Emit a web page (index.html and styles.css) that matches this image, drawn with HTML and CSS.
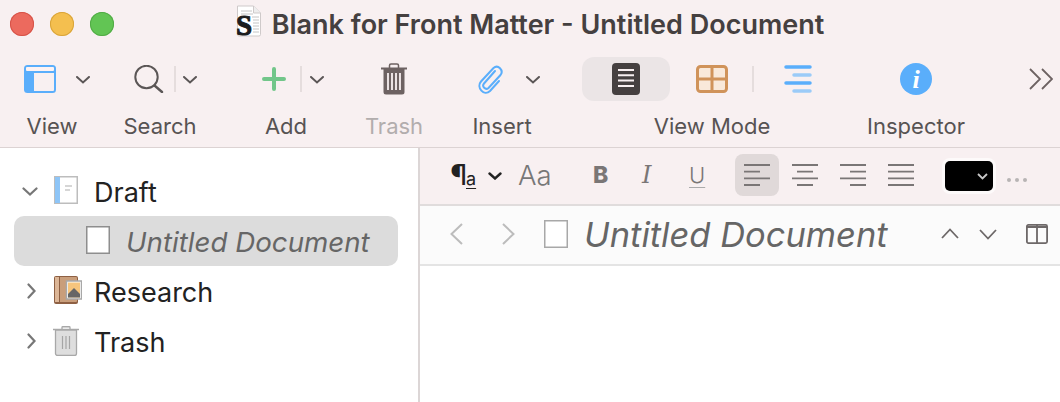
FILE: index.html
```html
<!DOCTYPE html>
<html lang="en">
<head>
<meta charset="utf-8">
<title>Blank for Front Matter - Untitled Document</title>
<link rel="stylesheet" href="styles.css">
</head>
<body>
<div class="window">
  <header class="chrome">
    <div class="titlebar">
      <div class="lights">
        <span class="light red"></span><span class="light yellow"></span><span class="light green"></span>
      </div>
      <div class="title">
        <svg class="doc-icon" width="26" height="38" viewBox="0 0 26 38">
          <path d="M1.500 1h16l7 7v21.500a1.500 1.500 0 0 1-1.500 1.500h-20a1.500 1.500 0 0 1-1.500-1.500z" fill="#fff" stroke="#cfcaca"/>
          <path d="M17.500 1v7h7" fill="#eee" stroke="#cfcaca"/>
          <path d="M5 6h11M5 9h12M16 12h7M17 15h6M17 18h6M17 21h6M17 24h6M17 27h6" stroke="#c4c4c4"/>
          <text x="0" y="29.500" class="doc-s">S</text>
        </svg>
        <span>Blank for Front Matter - Untitled Document</span>
      </div>
      <div></div>
    </div>
    <div class="toolbar">
      <div class="tool t-view">
        <div class="tool-icons">
          <svg class="i-view" width="32" height="28" viewBox="0 0 32 28"><rect x="0" y="0" width="32" height="28" rx="3.500" fill="#5aaefb"/><rect x="2" y="2" width="28" height="4" rx="1" fill="#fdf3f3"/><path d="M10 8h20v17a1 1 0 0 1-1 1h-19z" fill="#f8f0f1"/></svg>
          <svg class="chev" width="14" height="8" viewBox="0 0 14 8"><path d="M1 1l6 5.500 6-5.500" fill="none" stroke="#5b5656" stroke-width="2" stroke-linecap="round"/></svg>
        </div>
        <div class="label">View</div>
      </div>
      <div class="tool t-search">
        <div class="tool-icons">
          <svg class="i-search" width="30" height="28" viewBox="0 0 30 28"><circle cx="12.500" cy="12" r="11.200" fill="none" stroke="#5b5656" stroke-width="2"/><path d="M20.500 20.500l7.500 6.500" stroke="#5b5656" stroke-width="2.400" stroke-linecap="round"/></svg>
          <span class="sep"></span>
          <svg class="chev" width="14" height="8" viewBox="0 0 14 8"><path d="M1 1l6 5.500 6-5.500" fill="none" stroke="#5b5656" stroke-width="2" stroke-linecap="round"/></svg>
        </div>
        <div class="label">Search</div>
      </div>
      <div class="tool t-add">
        <div class="tool-icons">
          <svg class="i-plus" width="24" height="24" viewBox="0 0 24 24"><path d="M12 2v20M2 12h20" stroke="#72c68a" stroke-width="4" stroke-linecap="round"/></svg>
          <span class="sep"></span>
          <svg class="chev" width="14" height="8" viewBox="0 0 14 8"><path d="M1 1l6 5.500 6-5.500" fill="none" stroke="#5b5656" stroke-width="2" stroke-linecap="round"/></svg>
        </div>
        <div class="label">Add</div>
      </div>
      <div class="tool t-trash">
        <div class="tool-icons">
          <svg width="28" height="32" viewBox="0 0 28 32"><path d="M1 5.500h26" stroke="#6d6262" stroke-width="2"/><path d="M9.500 5V2.500q0-1.500 1.500-1.500h6q1.500 0 1.500 1.500V5" fill="none" stroke="#6d6262" stroke-width="1.500"/><path d="M3.500 6h21v23a2.500 2.500 0 0 1-2.500 2.500H6A2.500 2.500 0 0 1 3.500 29z" fill="#6d6262"/><path d="M8 10v17M12 10v17M16 10v17M20 10v17" stroke="#f8f0f1" stroke-width="1.800"/></svg>
        </div>
        <div class="label dim">Trash</div>
      </div>
      <div class="tool t-insert">
        <div class="tool-icons">
          <svg class="i-clip" width="26" height="30" viewBox="0 0 26 30"><path d="M17 7L6 19.500c-2.500 3 1.500 7 4.500 4.500L22.500 11c3.500-4.500-2.500-11-7-7L3 17.500c-5 6 3 15 9 9.500L21 17" fill="none" stroke="#5aaefb" stroke-width="2" stroke-linecap="round"/></svg>
          <svg class="chev" width="14" height="8" viewBox="0 0 14 8"><path d="M1 1l6 5.500 6-5.500" fill="none" stroke="#5b5656" stroke-width="2" stroke-linecap="round"/></svg>
        </div>
        <div class="label">Insert</div>
      </div>
      <div class="tool t-mode">
        <div class="tool-icons">
          <div class="mode-pill">
            <svg width="28" height="32" viewBox="0 0 28 32"><rect width="28" height="32" rx="4" fill="#454040"/><path d="M6 7h16M6 12.300h16M6 17.600h16M6 23h16" stroke="#f8f0f1" stroke-width="2"/></svg>
          </div>
          <svg class="i-grid" width="32" height="28" viewBox="0 0 32 28"><rect x="1.500" y="1.500" width="29" height="25" rx="3" fill="#f9e9da" stroke="#d0935a" stroke-width="3"/><path d="M16 1v26M1 14h30" stroke="#d0935a" stroke-width="3"/></svg>
          <span class="sep"></span>
          <svg class="i-outline" width="28" height="28" viewBox="0 0 28 28"><path d="M2 2h24M2 18h24" stroke="#5aaefb" stroke-width="3.500" stroke-linecap="round"/><path d="M10 10h16M10 26h16" stroke="#9bcbf8" stroke-width="3.500" stroke-linecap="round"/></svg>
        </div>
        <div class="label">View Mode</div>
      </div>
      <div class="tool t-inspector">
        <div class="tool-icons">
          <svg width="32" height="32" viewBox="0 0 32 32"><circle cx="16" cy="16" r="16" fill="#5aaefb"/><text x="16" y="25" class="info">i</text></svg>
        </div>
        <div class="label">Inspector</div>
      </div>
      <div class="tool t-more">
        <div class="tool-icons">
          <svg width="24" height="22" viewBox="0 0 24 22"><path d="M1 1l10 10L1 21M13 1l10 10-10 10" fill="none" stroke="#6d6262" stroke-width="1.800"/></svg>
        </div>
      </div>
    </div>
  </header>
  <main class="body">
    <aside class="sidebar">
      <div class="row">
        <svg class="disc" width="16" height="9" viewBox="0 0 16 9"><path d="M1.500 1.500L8 7.500l6.500-6" fill="none" stroke="#777" stroke-width="2.200" stroke-linecap="round"/></svg>
        <svg class="ri" width="24" height="28" viewBox="0 0 24 28"><rect x=".75" y=".75" width="22.500" height="26.500" fill="#fff" stroke="#bdbdbd" stroke-width="1.500"/><rect x="1" y="1" width="5" height="26" fill="#8ec5f7"/><path d="M11 10h7M11 14h5" stroke="#c9c9c9" stroke-width="1.500"/></svg>
        <span>Draft</span>
      </div>
      <div class="row child selected">
        <svg class="ri" width="24" height="28" viewBox="0 0 24 28"><rect x=".75" y=".75" width="22.500" height="26.500" fill="#fff" stroke="#8e8e8e" stroke-width="1.500"/></svg>
        <span class="italic">Untitled Document</span>
      </div>
      <div class="row">
        <svg class="disc closed" width="9" height="16" viewBox="0 0 9 16"><path d="M1.500 1.500L7.500 8l-6 6.500" fill="none" stroke="#777" stroke-width="2.200" stroke-linecap="round"/></svg>
        <svg class="ri book" width="28" height="28" viewBox="0 0 28 28"><rect x="0" y="0" width="24" height="28" rx="2" fill="#8e6043"/><rect x="1" y="1" width="22" height="25" rx="1" fill="#c99e7b"/><rect x="1" y="1" width="4" height="25" fill="#dcb697"/><rect x="5" y="0" width="1" height="28" fill="#8e6043"/><rect x="12.500" y="5" width="15" height="18" fill="#fff" stroke="#a8a8a8" stroke-width="1.500"/><rect x="14" y="6.500" width="12" height="15" fill="#f6c57d"/><path d="M14 18l6-6 6 6v3.500H14z" fill="#666"/></svg>
        <span>Research</span>
      </div>
      <div class="row">
        <svg class="disc closed" width="9" height="16" viewBox="0 0 9 16"><path d="M1.500 1.500L7.500 8l-6 6.500" fill="none" stroke="#777" stroke-width="2.200" stroke-linecap="round"/></svg>
        <svg class="ri bin" width="26" height="30" viewBox="0 0 26 30"><path d="M0 3.500h26" stroke="#a8a8a8" stroke-width="1.500"/><path d="M9 3V1.500q0-.75.75-.75h6.500q.75 0 .75.75V3" fill="none" stroke="#a8a8a8" stroke-width="1.300"/><path d="M2.500 4h21v23.500a2 2 0 0 1-2 2h-17a2 2 0 0 1-2-2z" fill="#dedede" stroke="#a8a8a8" stroke-width="1.300"/><path d="M9.500 10v13M13 10v13M16.500 10v13" stroke="#a5a5a5" stroke-width="1.200"/></svg>
        <span>Trash</span>
      </div>
    </aside>
    <section class="editor">
      <div class="format">
        <div class="f-style"><span class="pil">¶</span><span class="pil-a">a</span></div>
        <svg class="f-chev" width="14" height="8" viewBox="0 0 14 8"><path d="M1.500 1.500L7 6.500l5.500-5" fill="none" stroke="#222" stroke-width="2.400" stroke-linecap="round"/></svg>
        <span class="f-aa">Aa</span>
        <span class="f-b">B</span>
        <span class="f-i">I</span>
        <span class="f-u">U</span>
        <div class="align-on">
          <svg width="26" height="22" viewBox="0 0 26 22"><path d="M0 1h26M0 7.700h16M0 14.300h26M0 21h16" stroke="#7a7676" stroke-width="1.800"/></svg>
        </div>
        <svg class="al" width="26" height="22" viewBox="0 0 26 22"><path d="M0 1h26M5 7.700h16M0 14.300h26M5 21h16" stroke="#7a7676" stroke-width="1.800"/></svg>
        <svg class="al" width="26" height="22" viewBox="0 0 26 22"><path d="M0 1h26M10 7.700h16M0 14.300h26M10 21h16" stroke="#7a7676" stroke-width="1.800"/></svg>
        <svg class="al" width="26" height="22" viewBox="0 0 26 22"><path d="M0 1h26M0 7.700h26M0 14.300h26M0 21h26" stroke="#7a7676" stroke-width="1.800"/></svg>
        <div class="well">
          <svg width="11" height="7" viewBox="0 0 11 7"><path d="M1 1l4.500 4.500L10 1" fill="none" stroke="#c8c8c8" stroke-width="1.800"/></svg>
        </div>
        <div class="dots"><i></i><i></i><i></i></div>
      </div>
      <div class="nav">
        <svg class="n-prev" width="13" height="22" viewBox="0 0 13 22"><path d="M12 1L1.500 11 12 21" fill="none" stroke="#bcbcbc" stroke-width="2"/></svg>
        <svg class="n-next" width="13" height="22" viewBox="0 0 13 22"><path d="M1 1l10.500 10L1 21" fill="none" stroke="#bcbcbc" stroke-width="2"/></svg>
        <svg class="n-doc" width="24" height="28" viewBox="0 0 24 28"><rect x=".75" y=".75" width="22.500" height="26.500" fill="#fff" stroke="#a8a8a8" stroke-width="1.500"/></svg>
        <span class="n-title">Untitled Document</span>
        <svg class="n-up" width="18" height="11" viewBox="0 0 18 11"><path d="M1 10l8-8.500 8 8.500" fill="none" stroke="#6d6868" stroke-width="1.800"/></svg>
        <svg class="n-down" width="18" height="11" viewBox="0 0 18 11"><path d="M1 1l8 8.500 8-8.500" fill="none" stroke="#6d6868" stroke-width="1.800"/></svg>
        <svg class="n-split" width="22" height="20" viewBox="0 0 22 20"><rect x=".9" y=".9" width="20.200" height="18.200" rx="1.500" fill="none" stroke="#6d6868" stroke-width="1.800"/><path d="M11 1v18M1 3h20" stroke="#6d6868" stroke-width="1.800"/></svg>
      </div>
    </section>
  </main>
</div>
</body>
</html>
```
FILE: styles.css
```css
* { box-sizing: border-box; }
html, body { margin: 0; height: 100%; }
body { font-family: Inter, "Liberation Sans", sans-serif; background: #fff; overflow: hidden; }
svg { display: block; flex: none; }
.window { width: 1060px; height: 402px; display: flex; flex-direction: column; }

.chrome { height: 148px; background: #f8f0f1; border-bottom: 1px solid #dcd3d3; }
.titlebar { height: 48px; display: grid; grid-template-columns: 1fr auto 1fr; align-items: center; }
.lights { display: flex; gap: 16px; padding-left: 10px; }
.light { width: 24px; height: 24px; border-radius: 50%; }
.red { background: #ec6a5e; box-shadow: inset 0 0 0 1px #d65348; }
.yellow { background: #f4bf4f; box-shadow: inset 0 0 0 1px #d9a43a; }
.green { background: #62c554; box-shadow: inset 0 0 0 1px #52ab46; }
.title { display: flex; align-items: center; gap: 10px; font-size: 27px; font-weight: 600; color: #454040; white-space: nowrap; }
.doc-s { font-family: "Liberation Serif", serif; font-weight: 700; font-size: 29px; fill: #1c1c1c; stroke: #1c1c1c; stroke-width: 1px; }

.toolbar { display: flex; padding-left: 16px; height: 99px; padding-top: 9px; }
.tool { display: flex; flex-direction: column; align-items: center; }
.tool-icons { height: 44px; width: 100%; display: flex; align-items: center; }
.label { margin-top: 12px; font-size: 22px; line-height: 26px; color: #575353; white-space: nowrap; text-align: center; }
.label.dim { color: #b2adad; }
.sep { width: 2px; height: 26px; background: #e5dddd; flex: none; }
.chev { margin-top: 1px; }

.t-view { width: 72px; margin-right: 18px; }
.t-view .i-view { margin: 0 20px 0 8px; }
.t-search { width: 108px; margin-right: 18px; }
.t-search .i-search { margin-left: 28px; margin-right: 10px; }
.t-search .sep { margin-right: 7px; }
.t-add { width: 108px; margin-right: 18px; }
.t-add .i-plus { margin-left: 30px; margin-right: 14px; }
.t-add .sep { margin-right: 8px; }
.t-trash { width: 72px; margin-right: 36px; }
.t-trash .tool-icons { justify-content: center; }
.t-insert { width: 72px; margin-right: 44px; }
.t-insert .i-clip { margin-left: 12px; margin-right: 22px; }
.t-mode { width: 260px; margin-right: 38px; }
.mode-pill { width: 88px; height: 44px; border-radius: 12px; background: #ebe5e6; display: flex; align-items: center; justify-content: center; flex: none; }
.i-grid { margin-left: 26px; margin-right: 24px; }
.i-outline { margin-left: 30px; }
.t-inspector { width: 72px; margin-right: 77px; }
.t-inspector .tool-icons { justify-content: center; }
.t-more { width: 24px; }
.info { font-family: "Liberation Serif", serif; font-style: italic; font-weight: 700; font-size: 26px; fill: #fff; text-anchor: middle; }

.body { flex: 1; display: flex; min-height: 0; }
.sidebar { width: 420px; flex: none; padding: 18px 14px 0; border-right: 2px solid #dcd6d6; background: #fff; }
.row { height: 50px; display: flex; align-items: center; font-size: 27px; color: #222; }
.row > span { margin-top: 2px; }
.row .ri { margin-top: -2px; margin-right: 16px; }
.row .disc { margin-left: 8px; margin-right: 16px; }
.row .disc.closed { margin-left: 13px; margin-right: 18px; }
.row .book { margin-right: 12px; }
.row .bin { margin-left: -1px; margin-right: 15px; margin-top: 0; }
.row.child { padding-left: 72px; }
.selected { background: #dcdcdc; border-radius: 10px; width: 384px; }
.row .italic { font-style: italic; font-size: 27.700px; color: #666; }

.editor { flex: 1; display: flex; flex-direction: column; min-width: 0; }
.format { height: 58px; background: #f8f0f1; border-bottom: 2px solid #e0dcdc; display: flex; align-items: center; padding: 0 0 2px 30px; color: #7a7676; }
.f-style { width: 26px; display: flex; align-items: baseline; color: #222; }
.pil { font-size: 29px; line-height: 30px; width: 15px; }
.pil-a { font-size: 18px; text-decoration: underline; text-underline-offset: 3px; margin-left: 1px; }
.f-chev { margin-left: 12px; margin-top: 2px; }
.f-aa { font-size: 27.500px; font-weight: 300; margin-left: 16px; width: 31px; color: #777; }
.f-b { font-size: 23px; font-weight: 800; margin-left: 44px; width: 16px; }
.f-i { font-family: "DejaVu Serif", serif; font-style: italic; font-size: 24px; margin-left: 33px; width: 13px; font-weight: 300; }
.f-u { font-size: 22px; font-weight: 300; margin-left: 34px; width: 16px; text-decoration: underline; text-underline-offset: 4px; text-decoration-thickness: 1px; text-decoration-color: #aaa; }
.align-on { width: 44px; height: 42px; margin-left: 30px; border-radius: 8px; background: #e0d9d9; display: flex; align-items: center; justify-content: center; }
.al { margin-left: 22px; }
.align-on + .al { margin-left: 13px; }
.well { width: 48px; height: 30px; margin-left: 31px; background: #000; border-radius: 5px; box-shadow: 0 0 0 3px #fdfafa; display: flex; align-items: center; justify-content: flex-end; padding-right: 5px; margin-top: 2px; }
.dots { display: flex; gap: 4px; margin-left: 14px; margin-top: 10px; }
.dots i { width: 4px; height: 4px; border-radius: 50%; background: #b8b4b4; }

.nav { height: 60px; background: #fbfbfb; border-bottom: 2px solid #e4e4e4; display: flex; align-items: center; padding: 0 0 2px 30px; }
.n-next { margin-left: 39px; }
.n-doc { margin-left: 29px; }
.n-title { margin-left: 16px; width: 357px; font-size: 34.500px; font-style: italic; color: #666; white-space: nowrap; }
.n-up { margin-top: -2px; }
.n-down { margin-left: 20px; margin-top: 1px; }
.n-split { margin-left: 29px; }
```
